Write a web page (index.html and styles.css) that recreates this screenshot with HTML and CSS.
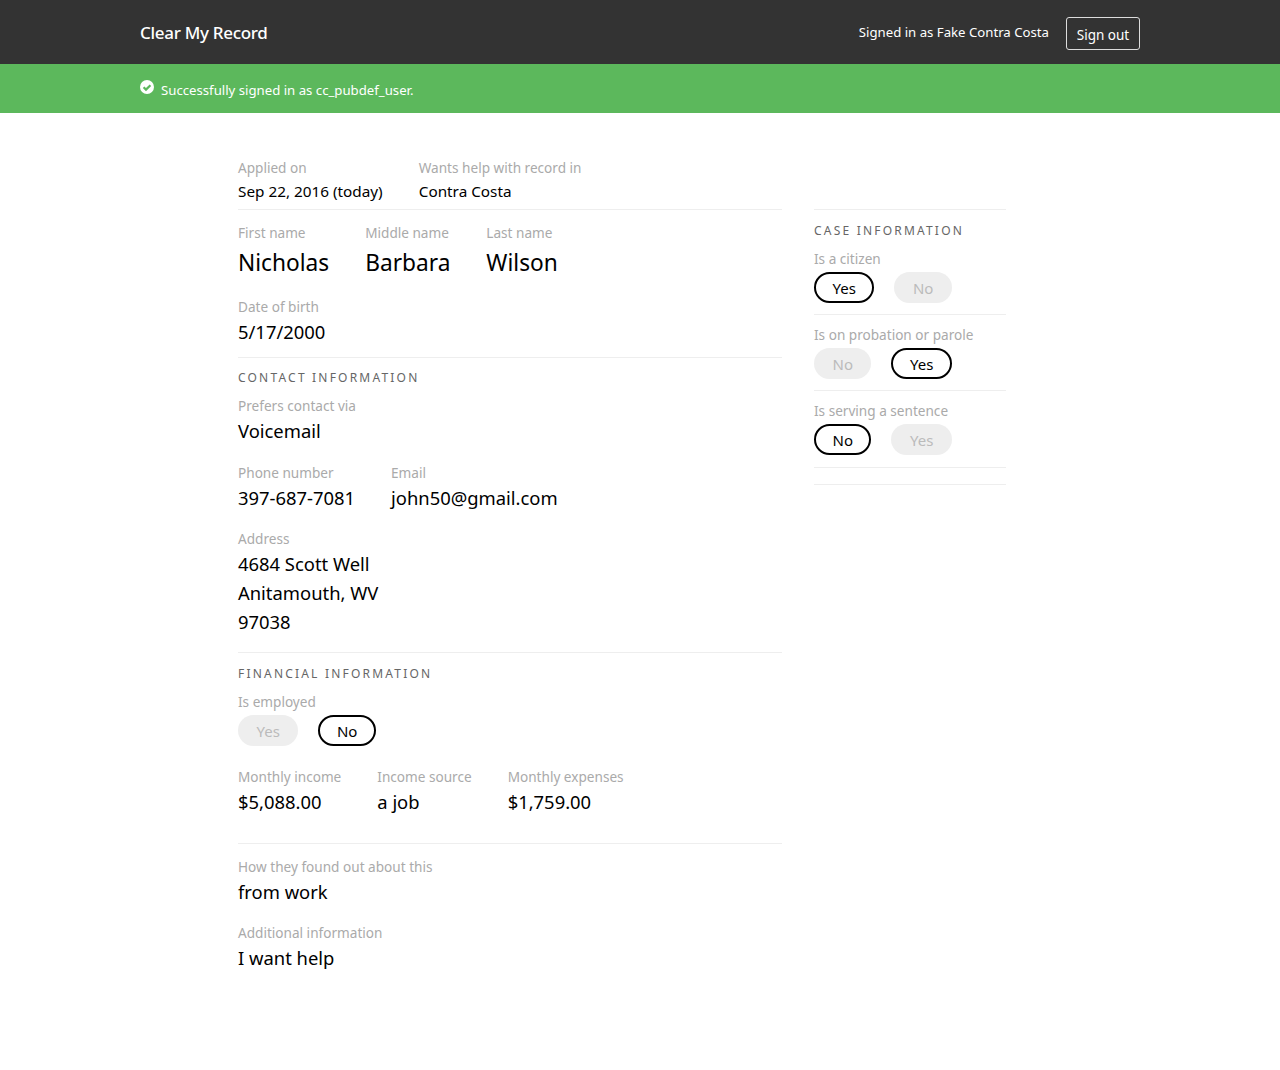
FILE: index.html
```html
<!DOCTYPE html>
<html lang="en">
<head>
    <meta charset="UTF-8">
    <meta name="viewport" content="width=device-width, initial-scale=1.0">
    <title>Clear My Record</title>
    <link rel="stylesheet" href="styles.css">
</head>
<body>
    <header class="topbar">
        <div class="topbar-inner">
            <span class="brand">Clear My Record</span>
            <div class="account">
                <span class="signed-in">Signed in as Fake Contra Costa</span>
                <a class="sign-out">Sign out</a>
            </div>
        </div>
    </header>

    <div class="flash">
        <div class="flash-inner">
            <svg class="flash-icon" viewBox="0 0 14 14" width="14" height="14">
                <circle cx="7" cy="7" r="7" fill="#fff"/>
                <path d="M3.6 7.2 L6 9.6 L10.4 5.2" fill="none" stroke="#5cb85c" stroke-width="2.2"/>
            </svg>
            <span class="flash-text">Successfully signed in as cc_pubdef_user.</span>
        </div>
    </div>

    <div class="layout">
        <main class="details">
            <section class="block block-meta">
                <div class="row">
                    <div class="field"><div class="label">Applied on</div><div class="value small">Sep 22, 2016 (today)</div></div>
                    <div class="field"><div class="label">Wants help with record in</div><div class="value small">Contra Costa</div></div>
                </div>
            </section>

            <section class="block block-person">
                <div class="row">
                    <div class="field"><div class="label">First name</div><div class="value large">Nicholas</div></div>
                    <div class="field"><div class="label">Middle name</div><div class="value large">Barbara</div></div>
                    <div class="field"><div class="label">Last name</div><div class="value large">Wilson</div></div>
                </div>
                <div class="field spaced-dob"><div class="label">Date of birth</div><div class="value">5/17/2000</div></div>
            </section>

            <section class="block block-contact">
                <h2 class="heading">Contact information</h2>
                <div class="field"><div class="label">Prefers contact via</div><div class="value">Voicemail</div></div>
                <div class="row spaced-row">
                    <div class="field"><div class="label">Phone number</div><div class="value">397-687-7081</div></div>
                    <div class="field"><div class="label">Email</div><div class="value">john50@gmail.com</div></div>
                </div>
                <div class="field spaced">
                    <div class="label">Address</div>
                    <div class="value">4684 Scott Well<br>Anitamouth, WV<br>97038</div>
                </div>
            </section>

            <section class="block block-money">
                <h2 class="heading">Financial information</h2>
                <div class="label">Is employed</div>
                <div class="choices">
                    <span class="choice off">Yes</span>
                    <span class="choice on">No</span>
                </div>
                <div class="row spaced-money">
                    <div class="field"><div class="label">Monthly income</div><div class="value">$5,088.00</div></div>
                    <div class="field"><div class="label">Income source</div><div class="value">a job</div></div>
                    <div class="field"><div class="label">Monthly expenses</div><div class="value">$1,759.00</div></div>
                </div>
            </section>

            <section class="block-last">
                <div class="field"><div class="label">How they found out about this</div><div class="value">from work</div></div>
                <div class="field spaced"><div class="label">Additional information</div><div class="value">I want help</div></div>
            </section>
        </main>

        <aside class="sidebar">
            <section class="side-block side-first">
                <h2 class="heading">Case information</h2>
                <div class="label">Is a citizen</div>
                <div class="choices">
                    <span class="choice on">Yes</span>
                    <span class="choice off">No</span>
                </div>
            </section>
            <section class="side-block side-tall">
                <div class="label">Is on probation or parole</div>
                <div class="choices">
                    <span class="choice off">No</span>
                    <span class="choice on">Yes</span>
                </div>
            </section>
            <section class="side-block side-tall">
                <div class="label">Is serving a sentence</div>
                <div class="choices">
                    <span class="choice on">No</span>
                    <span class="choice off">Yes</span>
                </div>
            </section>
            <div class="side-empty"></div>
        </aside>
    </div>
</body>
</html>
```

FILE: styles.css
```css
body {
    margin: 0;
    background-color: #ffffff;
    color: #000000;
    font-family: "Noto Sans", "Open Sans", sans-serif;
    font-size: 14px;
}

.topbar {
    background-color: #333333;
    height: 64px;
    color: #ffffff;
}

.topbar-inner,
.flash-inner {
    width: 1000px;
    margin: 0 auto;
}

.topbar-inner {
    display: flex;
    justify-content: space-between;
    align-items: center;
    height: 100%;
}

.brand {
    font-size: 17px;
    font-weight: 500;
    letter-spacing: -0.3px;
}

.account {
    display: flex;
    align-items: center;
    gap: 17px;
    padding-top: 2px;
}

.signed-in {
    font-size: 13.2px;
    margin-bottom: 3px;
}

.sign-out {
    display: block;
    box-sizing: border-box;
    height: 33px;
    width: 74px;
    border: 1px solid #dddddd;
    border-radius: 3px;
    font-size: 13.5px;
    line-height: 35px;
    text-align: center;
}

.flash {
    background-color: #5cb85c;
    height: 49px;
    color: #ffffff;
}

.flash-inner {
    display: flex;
    align-items: flex-start;
    gap: 7px;
}

.flash-icon {
    margin-top: 16px;
}

.flash-text {
    font-size: 13.2px;
    line-height: 20px;
    margin-top: 16px;
}

.layout {
    width: 902px;
    margin: 0 auto;
    padding-left: 98px;
    display: grid;
    grid-template-columns: 544px 192px;
    gap: 32px;
}

.details {
    padding-top: 45px;
}

.block {
    border-bottom: 1px solid #eeeeee;
}

.block-meta {
    height: 51px;
}

.block-person {
    padding-top: 13px;
    height: 134px;
}

.block-contact {
    height: 284px;
}

.block-contact .heading {
    margin-top: 10px;
}

.block-money {
    height: 179px;
}

.block-last {
    padding-top: 13px;
}

.row {
    display: flex;
    gap: 36px;
}

.spaced {
    margin-top: 17px;
}

.spaced-row {
    margin-top: 18px;
}

.spaced-dob {
    margin-top: 15px;
}

.spaced-money {
    margin-top: 21px;
}

.label {
    color: #aaaaaa;
    font-size: 13.6px;
    line-height: 20px;
}

.value {
    font-size: 18.4px;
    line-height: 29px;
    white-space: nowrap;
}

.value.small {
    font-size: 15.3px;
    line-height: 26px;
}

.value.large {
    margin-top: 1px;
    font-size: 22.7px;
    line-height: 38px;
}

.heading {
    margin: 11px 0 8px;
    color: #666666;
    font-size: 12px;
    font-weight: 400;
    line-height: 20px;
    letter-spacing: 2.2px;
    text-transform: uppercase;
}

.choices {
    display: flex;
    gap: 20px;
    margin-top: 3px;
}

.choice {
    box-sizing: border-box;
    height: 31px;
    padding: 0 16.5px;
    border: 2px solid transparent;
    border-radius: 16px;
    font-size: 15px;
    line-height: 29px;
    text-align: center;
}

.choice.on {
    border-color: #000000;
    color: #000000;
}

.choice.off {
    background-color: #eeeeee;
    color: #bbbbbb;
}

.sidebar {
    padding-top: 96px;
}

.side-block {
    border-top: 1px solid #eeeeee;
    padding-top: 10px;
    box-sizing: border-box;
}

.side-first {
    height: 105px;
    padding-top: 0;
}

.side-tall {
    height: 76px;
}

.side-tall + .side-tall {
    height: 77px;
}

.side-empty {
    height: 18px;
    border-top: 1px solid #eeeeee;
    border-bottom: 1px solid #eeeeee;
    box-sizing: border-box;
}
```
